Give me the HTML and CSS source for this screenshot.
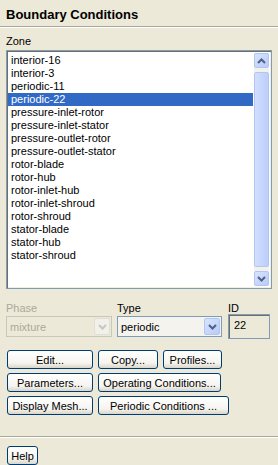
FILE: index.html
```html
<!DOCTYPE html>
<html lang="en">
<head>
    <meta charset="UTF-8">
    <meta name="viewport" content="width=device-width, initial-scale=1.0">
    <title>Boundary Conditions</title>
    <link rel="stylesheet" href="styles.css">
</head>
<body>
    <div class="panel">
        <h1 class="title">Boundary Conditions</h1>
        <div class="sep"></div>

        <div class="label zone-label">Zone</div>
        <div class="listbox">
            <ul class="items">
                <li>interior-16</li>
                <li>interior-3</li>
                <li>periodic-11</li>
                <li class="selected">periodic-22</li>
                <li>pressure-inlet-rotor</li>
                <li>pressure-inlet-stator</li>
                <li>pressure-outlet-rotor</li>
                <li>pressure-outlet-stator</li>
                <li>rotor-blade</li>
                <li>rotor-hub</li>
                <li>rotor-inlet-hub</li>
                <li>rotor-inlet-shroud</li>
                <li>rotor-shroud</li>
                <li>stator-blade</li>
                <li>stator-hub</li>
                <li>stator-shroud</li>
            </ul>
            <div class="scrollbar">
                <div class="sb-btn">
                    <svg width="9" height="6" viewBox="0 0 9 6"><polyline points="1,5 4.5,1.5 8,5" fill="none" stroke="#4d6185" stroke-width="2"/></svg>
                </div>
                <div class="sb-thumb"></div>
                <div class="sb-btn">
                    <svg width="9" height="6" viewBox="0 0 9 6"><polyline points="1,1 4.5,4.5 8,1" fill="none" stroke="#4d6185" stroke-width="2"/></svg>
                </div>
            </div>
        </div>

        <div class="fields">
            <div class="field phase">
                <div class="label disabled">Phase</div>
                <div class="combo combo-disabled">
                    <span class="combo-text">mixture</span>
                    <span class="combo-btn">
                        <svg width="9" height="6" viewBox="0 0 9 6"><polyline points="1,1 4.5,4.5 8,1" fill="none" stroke="#c9c7ba" stroke-width="2"/></svg>
                    </span>
                </div>
            </div>
            <div class="field type">
                <div class="label">Type</div>
                <div class="combo">
                    <span class="combo-text">periodic</span>
                    <span class="combo-btn">
                        <svg width="9" height="6" viewBox="0 0 9 6"><polyline points="1,1 4.5,4.5 8,1" fill="none" stroke="#4d6185" stroke-width="2"/></svg>
                    </span>
                </div>
            </div>
            <div class="field id">
                <div class="label">ID</div>
                <div class="idbox">22</div>
            </div>
        </div>

        <div class="btn-rows">
            <div class="btn-row">
                <button class="btn w-first">Edit...</button>
                <button class="btn w-copy">Copy...</button>
                <button class="btn w-profiles">Profiles...</button>
            </div>
            <div class="btn-row">
                <button class="btn w-first">Parameters...</button>
                <button class="btn w-operating">Operating Conditions...</button>
            </div>
            <div class="btn-row">
                <button class="btn w-first">Display Mesh...</button>
                <button class="btn w-periodic">Periodic Conditions ...</button>
            </div>
        </div>

        <div class="sep bottom-sep"></div>
        <div class="btn-row help-row">
            <button class="btn w-help">Help</button>
        </div>
    </div>
</body>
</html>
```

FILE: styles.css
```css
body {
    margin: 0;
    background-color: #ECE9D8; /* XP dialog face */
    color: #000;
    font-family: "Liberation Sans", Arial, sans-serif;
    font-size: 11px;
}

.panel {
    width: 278px;
    height: 465px;
    overflow: hidden;
}

.title {
    margin: 0;
    padding: 7px 6px 0;
    font-size: 13px;
    line-height: 16px;
    font-weight: bold;
    height: 19px;
}

.sep {
    border-top: 1px solid #ACA899;
    border-bottom: 1px solid #fff;
}

.label {
    line-height: 13px;
    height: 13px;
}

.label.disabled {
    color: #ACA899;
}

.zone-label {
    margin: 7px 0 2px 6px;
}

/* Zone list */
.listbox {
    margin-left: 6px;
    width: 266px;
    height: 239px;
    box-sizing: border-box;
    border: 1px solid #7F9DB9;
    box-shadow: inset 1px 1px 0 #716F64, inset -1px -1px 0 #F1EFE2;
    background: #fff;
    display: flex;
    padding: 2px 2px 2px 1px;
}

.items {
    list-style: none;
    margin: 0;
    padding: 1px 0 0 0;
    flex: 1;
}

.items li {
    height: 13px;
    line-height: 13px;
    padding-left: 3px;
    white-space: nowrap;
}

.items li.selected {
    background-color: #316AC5;
    color: #fff;
}

.scrollbar {
    width: 15px;
    margin-left: 1px;
    display: flex;
    flex-direction: column;
    background: #F3F1EC;
}

.sb-btn {
    height: 15px;
    box-sizing: border-box;
    border: 1px solid #B3C6F2;
    border-radius: 2px;
    background: linear-gradient(135deg, #D8E4FE, #B8CBF8);
    display: flex;
    align-items: center;
    justify-content: center;
}

.sb-thumb {
    flex: 1;
    margin: 4px 0;
    border: 1px solid #B3C6F2;
    border-radius: 2px;
    background: linear-gradient(90deg, #D2DFFE, #BCCEFA);
}

/* Phase / Type / ID */
.fields {
    display: flex;
    margin: 13px 0 0 6px;
}

.phase {
    width: 106px;
}

.type {
    width: 105px;
    margin-left: 5px;
}

.id {
    width: 42px;
    margin-left: 6px;
}

.combo {
    margin-top: 1px;
    height: 21px;
    box-sizing: border-box;
    border: 1px solid #7F9DB9;
    background: #F4F3EE;
    display: flex;
    align-items: center;
    padding: 1px;
}

.combo-text {
    flex: 1;
    padding-left: 2px;
}

.combo-btn {
    width: 16px;
    height: 17px;
    box-sizing: border-box;
    border: 1px solid #B3C6F2;
    border-radius: 2px;
    background: linear-gradient(135deg, #D8E4FE, #B8CBF8);
    display: flex;
    align-items: center;
    justify-content: center;
}

.combo-disabled {
    border-color: #C9C7BA;
    color: #ACA899;
    background: #ECE9D8;
}

.combo-disabled .combo-btn {
    border-color: #E1DFD5;
    background: #F1F0EA;
}

.idbox {
    margin-top: -1px;
    height: 25px;
    box-sizing: border-box;
    border: 1px solid #7F9DB9;
    box-shadow: inset 1px 1px 0 #716F64;
    padding: 4px 0 0 5px;
}

/* Buttons */
.btn-rows {
    margin: 11px 0 0 7px;
    display: flex;
    flex-direction: column;
    gap: 4px;
}

.btn-row {
    display: flex;
    gap: 5px;
}

.btn {
    height: 19px;
    padding: 0;
    font-family: inherit;
    font-size: 11px;
    color: #000;
    border: 1px solid #003C74;
    border-radius: 3px;
    background: linear-gradient(#FFFFFF, #F5F4EF 70%, #D9D5CA);
    box-sizing: border-box;
}

.w-first { width: 86px; }
.w-copy { width: 60px; }
.w-profiles { width: 59px; }
.w-operating { width: 123px; }
.w-periodic { width: 131px; }
.w-help { width: 31px; }

.bottom-sep {
    margin-top: 21px;
}

.help-row {
    margin: 8px 0 0 7px;
}
```
